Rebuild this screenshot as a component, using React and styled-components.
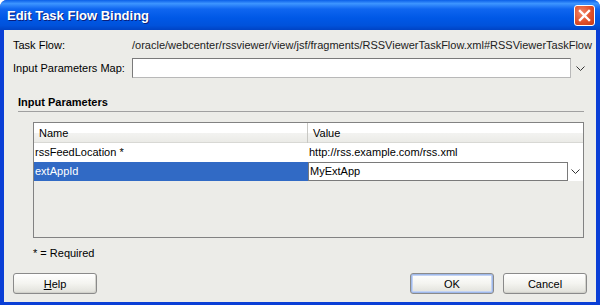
import React from "react";
import styled, { createGlobalStyle } from "styled-components";

const GlobalStyle = createGlobalStyle`
  html, body {
    margin: 0;
    padding: 0;
    background: #ffffff;
  }
  * {
    box-sizing: border-box;
  }
`;

const params = [
  { name: "rssFeedLocation *", value: "http://rss.example.com/rss.xml" },
  { name: "extAppId", value: "MyExtApp", selected: true },
];

// Dropdown chevron used by combo boxes
const Chevron = () => (
  <svg width="9" height="5" viewBox="0 0 9 5">
    <path d="M0.5 0.5 L4.5 4.5 L8.5 0.5" fill="none" stroke="#333" strokeWidth="1" />
  </svg>
);

const App = () => {
  return (
    <Window>
      <GlobalStyle />
      <TitleBar>
        <Title>Edit Task Flow Binding</Title>
        <CloseButton>
          <svg width="13" height="13" viewBox="0 0 13 13">
            <path d="M2 2 L11 11 M11 2 L2 11" stroke="#fff" strokeWidth="2.4" strokeLinecap="square" />
          </svg>
        </CloseButton>
      </TitleBar>

      <Body>
        <FormGrid>
          <Label>Task Flow:</Label>
          <Value>/oracle/webcenter/rssviewer/view/jsf/fragments/RSSViewerTaskFlow.xml#RSSViewerTaskFlow</Value>
          <Label>Input Parameters Map:</Label>
          <Combo>
            <ComboField />
            <ArrowCell>
              <Chevron />
            </ArrowCell>
          </Combo>
        </FormGrid>

        <SectionTitle>Input Parameters</SectionTitle>

        <Table>
          <HeaderRow>
            <HeaderCell>Name</HeaderCell>
            <HeaderCell last>Value</HeaderCell>
          </HeaderRow>
          {params.map((p) => (
            <Row key={p.name}>
              <NameCell selected={p.selected}>{p.name}</NameCell>
              {p.selected ? (
                <EditorCell>
                  <Editor>{p.value}</Editor>
                  <EditorArrow>
                    <Chevron />
                  </EditorArrow>
                </EditorCell>
              ) : (
                <ValueCell>{p.value}</ValueCell>
              )}
            </Row>
          ))}
        </Table>

        <Note>* = Required</Note>

        <ButtonBar>
          <Button>
            <u>H</u>elp
          </Button>
          <Spacer />
          <Button focused>OK</Button>
          <Button>Cancel</Button>
        </ButtonBar>
      </Body>
    </Window>
  );
};

const Window = styled.div`
  width: 600px;
  height: 305px;
  display: flex;
  flex-direction: column;
  font-family: "Liberation Sans", Arial, sans-serif;
  font-size: 11px;
  color: #000;
  background: #0a3fd6;
  border-radius: 7px 7px 0 0;
  overflow: hidden;
`;

const TitleBar = styled.div`
  height: 30px;
  flex: none;
  display: flex;
  align-items: center;
  justify-content: space-between;
  padding: 0 5px 0 7px;
  background: linear-gradient(
    to bottom,
    #0a5fe8 0%,
    #3d95ff 12%,
    #0f66f0 30%,
    #0058e6 60%,
    #0052db 85%,
    #0043c4 100%
  );
`;

const Title = styled.div`
  color: #fff;
  font-weight: bold;
  font-size: 13px;
  text-shadow: 1px 1px 0 #0a1e7a;
  padding-top: 1px;
`;

const CloseButton = styled.div`
  width: 21px;
  height: 21px;
  border: 1px solid #fff;
  border-radius: 3px;
  background: radial-gradient(circle at 35% 35%, #f3876a 0%, #e0502a 55%, #c23a18 100%);
  display: flex;
  align-items: center;
  justify-content: center;
  margin-top: 1px;
`;

const Body = styled.div`
  flex: 1;
  margin: 0 4px 3px 4px;
  background: #ecece8;
  padding: 7px 9px 0 9px;
  display: flex;
  flex-direction: column;
`;

const FormGrid = styled.div`
  display: grid;
  grid-template-columns: 119px 1fr;
  row-gap: 5px;
  align-items: center;
`;

const Label = styled.div`
  line-height: 16px;
`;

const Value = styled.div`
  line-height: 16px;
  white-space: nowrap;
  color: #222;
`;

const Combo = styled.div`
  display: flex;
  align-items: center;
  height: 20px;
`;

const ComboField = styled.div`
  width: 439px;
  height: 20px;
  background: #fff;
  border: 1px solid #7a7a7a;
  border-right-color: #b8b8b8;
  border-bottom-color: #b8b8b8;
`;

const ArrowCell = styled.div`
  width: 16px;
  display: flex;
  justify-content: center;
  align-items: center;
  padding-left: 2px;
`;

const SectionTitle = styled.div`
  font-weight: bold;
  margin: 18px 3px 0 5px;
  padding-bottom: 2px;
  line-height: 13px;
  border-bottom: 1px solid #a0a0a0;
`;

const Table = styled.div`
  margin: 10px 3px 0 20px;
  height: 116px;
  border: 1px solid #828282;
  display: flex;
  flex-direction: column;
`;

const HeaderRow = styled.div`
  display: grid;
  grid-template-columns: 274px 1fr;
  height: 20px;
  background: linear-gradient(to bottom, #fff 0%, #fff 50%, #f3f3f1 52%, #ebebe7 100%);
  border-bottom: 1px solid #d8d8d4;
`;

const HeaderCell = styled.div`
  padding-left: 5px;
  line-height: 20px;
  border-right: ${({ last }) => (last ? "none" : "1px solid #c8c8c4")};
`;

const Row = styled.div`
  display: grid;
  grid-template-columns: 274px 1fr;
  height: 19px;
  background: #fff;
`;

const NameCell = styled.div`
  padding-left: 1px;
  line-height: 19px;
  background: ${({ selected }) => (selected ? "#316ac5" : "#fff")};
  color: ${({ selected }) => (selected ? "#fff" : "#000")};
  border-right: 1px solid ${({ selected }) => (selected ? "#316ac5" : "#fff")};
`;

const ValueCell = styled.div`
  padding-left: 1px;
  line-height: 19px;
`;

const EditorCell = styled.div`
  display: flex;
  align-items: center;
  background: #fff;
`;

const Editor = styled.div`
  width: 260px;
  height: 19px;
  line-height: 17px;
  padding-left: 1px;
  border: 1px solid #7a7a7a;
`;

const EditorArrow = styled.div`
  flex: 1;
  display: flex;
  justify-content: center;
  align-items: center;
`;

const Note = styled.div`
  margin: 8px 0 0 20px;
  line-height: 14px;
`;

const ButtonBar = styled.div`
  display: flex;
  align-items: center;
  gap: 9px;
  margin-top: 13px;
`;

const Spacer = styled.div`
  flex: 1;
`;

const Button = styled.div`
  width: 84px;
  height: 21px;
  border: 1px solid #8a8a8a;
  border-radius: 3px;
  display: flex;
  align-items: center;
  justify-content: center;
  background: linear-gradient(to bottom, #ffffff 0%, #f4f4f0 50%, #e4e4de 90%, #d6d6cf 100%);
  box-shadow: ${({ focused }) =>
    focused ? "inset 0 0 0 1px #9fb9ea, inset 0 0 0 2px #c3d3f4" : "inset -1px -1px 0 #d2d2cc"};

  u {
    text-decoration: underline;
  }
`;

export default App;
